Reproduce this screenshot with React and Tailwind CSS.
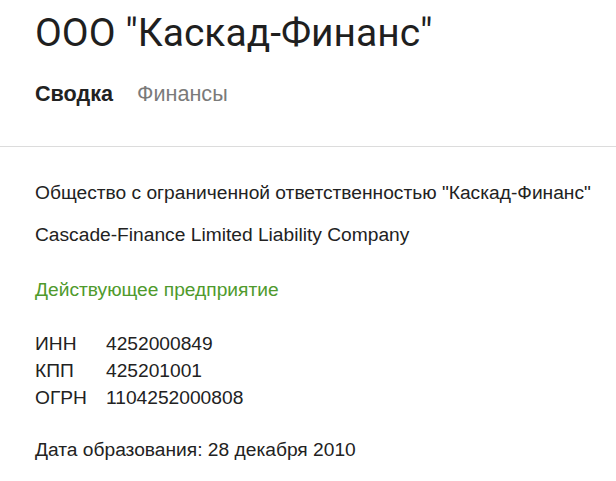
import React from 'react';

const codes = [
  { label: 'ИНН', value: '4252000849' },
  { label: 'КПП', value: '425201001' },
  { label: 'ОГРН', value: '1104252000808' },
];

const App = () => {
  return (
    <div className="w-[616px] h-[481px] bg-white text-[#222] font-['Liberation_Sans',Arial,sans-serif] overflow-hidden">
      {/* Header */}
      <div className="border-b border-[#dcdcdc] px-[35px] pt-[9px] pb-[40px]">
        <h1 className="font-['Roboto',sans-serif] text-[39px] leading-[48px] text-[#1f1f1f]">
          ООО "Каскад-Финанс"
        </h1>
        <div className="mt-[25px] flex gap-[24px] text-[21.6px] leading-[24px]">
          <span className="font-bold text-[#222]">Сводка</span>
          <span className="text-[#7a7a7a]">Финансы</span>
        </div>
      </div>

      {/* Body */}
      <div className="px-[35px] pt-[35px] text-[19.2px] leading-[22px] whitespace-nowrap">
        <p>Общество с ограниченной ответственностью "Каскад-Финанс"</p>
        <p className="mt-[20px]">Cascade-Finance Limited Liability Company</p>
        <p className="mt-[33px] text-[#4f9a2c]">Действующее предприятие</p>

        <div className="mt-[32px] flex flex-col gap-[5px]">
          {codes.map((c) => (
            <div key={c.label} className="flex">
              <span className="w-[71px]">{c.label}</span>
              <span>{c.value}</span>
            </div>
          ))}
        </div>

        <p className="mt-[30px]">Дата образования: 28 декабря 2010</p>
      </div>
    </div>
  );
};

export default App;
